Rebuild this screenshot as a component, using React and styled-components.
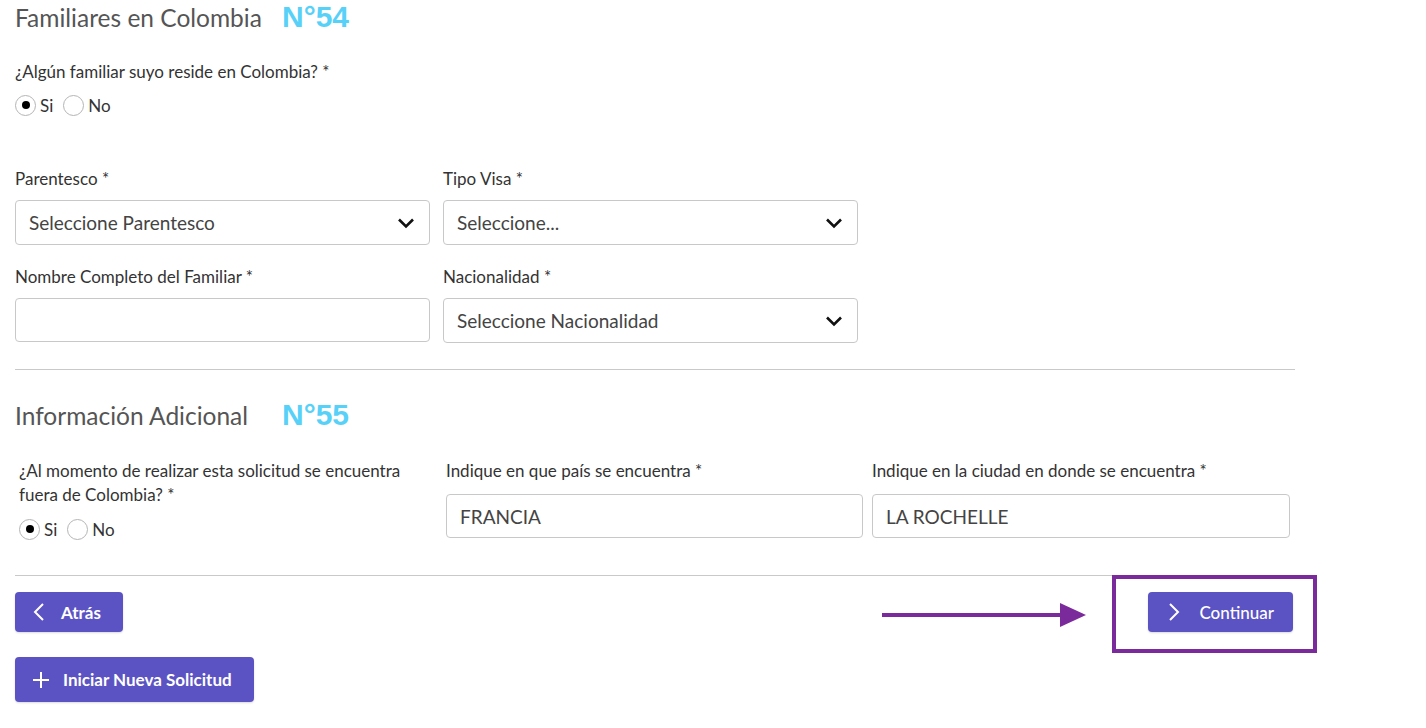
import styled, { createGlobalStyle } from "styled-components";

const GlobalStyle = createGlobalStyle`
  body {
    margin: 0;
    background: #fff;
    font-family: Lato, "Open Sans", sans-serif;
    color: #333;
  }
`;

const Page = styled.div`
  padding: 0 0 20px 15px;
  width: 1280px;
`;

const SectionHeader = styled.div`
  display: flex;
  align-items: baseline;
  height: 32px;
  margin-top: ${(p) => p.$mt || 0}px;
`;

const Title = styled.h2`
  margin: 0;
  width: 267px;
  font-size: 24.5px;
  line-height: 28px;
  font-weight: 400;
  color: #555;
`;

const Number = styled.span`
  font-family: "Liberation Sans", Arial, sans-serif;
  font-weight: 700;
  font-size: 30px;
  color: #58d1f9;
`;

const Label = styled.div`
  font-size: 17px;
  line-height: 24px;
  color: #333;
  margin-top: ${(p) => p.$mt || 0}px;
`;

const RadioRow = styled.div`
  display: flex;
  align-items: center;
  height: 24px;
  margin-top: ${(p) => p.$mt || 0}px;
  font-size: 17px;
  color: #333;
`;

const RadioOption = styled.label`
  display: flex;
  align-items: center;
  gap: 4px;
  margin-right: 10px;
`;

const Circle = styled.span`
  box-sizing: border-box;
  width: 21px;
  height: 21px;
  border-radius: 50%;
  border: 1px solid #b5b5b5;
  display: flex;
  align-items: center;
  justify-content: center;

  &::after {
    content: "";
    display: ${(p) => (p.$checked ? "block" : "none")};
    width: 8px;
    height: 8px;
    border-radius: 50%;
    background: #000;
  }
`;

const Grid = styled.div`
  display: grid;
  grid-template-columns: ${(p) => p.$cols};
  column-gap: ${(p) => p.$gap}px;
  margin-top: ${(p) => p.$mt || 0}px;
`;

const Field = styled.div`
  display: flex;
  flex-direction: column;
  padding-left: ${(p) => p.$pl || 0}px;
`;

const Box = styled.div`
  box-sizing: border-box;
  height: ${(p) => p.$h || 45}px;
  margin-top: ${(p) => p.$mt || 9}px;
  margin-bottom: ${(p) => p.$mb || 0}px;
  border: 1px solid #c8c8c8;
  border-radius: 4px;
  display: flex;
  align-items: center;
  justify-content: space-between;
  padding: 0 14px 0 13px;
  font-size: 19px;
  color: #444;
`;

const Divider = styled.hr`
  margin: ${(p) => p.$mt}px 0 0;
  border: none;
  border-top: 1px solid #c9c9c9;
  width: 1280px;
`;

const Footer = styled.div`
  margin-top: 16px;
  display: flex;
  justify-content: space-between;
  align-items: center;
  width: 1278px;
`;

const BottomRow = styled.div`
  margin-top: 25px;
  display: flex;
`;

const Button = styled.button`
  display: flex;
  align-items: center;
  gap: ${(p) => p.$gap || 16}px;
  height: ${(p) => p.$h || 40}px;
  padding: 0 ${(p) => p.$pr || 19}px 0 ${(p) => p.$pl || 18}px;
  border: none;
  border-radius: 4px;
  background: #5b53c3;
  color: #fff;
  font-family: Lato, sans-serif;
  font-size: 17px;
  font-weight: ${(p) => p.$weight || 700};
  box-shadow: 0 1px 2px rgba(0, 0, 0, 0.15);
`;

const Highlight = styled.div`
  position: relative;
`;

const HighlightBox = styled.div`
  position: absolute;
  left: -36px;
  top: -17px;
  right: -24px;
  bottom: -21px;
  border: 4px solid #7b2a9b;
  pointer-events: none;
`;

const Arrow = styled.svg`
  position: absolute;
  left: -266px;
  top: 10px;
`;

const Chevron = () => (
  <svg width="18" height="12" viewBox="0 0 18 12">
    <polyline points="2,2.5 9,9.5 16,2.5" fill="none" stroke="#111" strokeWidth="2.6" />
  </svg>
);

const Radio = ({ checked, children }) => (
  <RadioOption>
    <Circle $checked={checked} />
    {children}
  </RadioOption>
);

export default function App() {
  return (
    <>
      <GlobalStyle />
      <Page>
        <SectionHeader>
          <Title>Familiares en Colombia</Title>
          <Number>N°54</Number>
        </SectionHeader>
        <Label $mt={28}>¿Algún familiar suyo reside en Colombia? *</Label>
        <RadioRow $mt={9}>
          <Radio checked>Si</Radio>
          <Radio>No</Radio>
        </RadioRow>

        <Grid $cols="415px 415px" $gap={13} $mt={50}>
          <Field>
            <Label>Parentesco *</Label>
            <Box $mb={20}>
              Seleccione Parentesco
              <Chevron />
            </Box>
            <Label>Nombre Completo del Familiar *</Label>
            <Box $h={44} />
          </Field>
          <Field>
            <Label>Tipo Visa *</Label>
            <Box $mb={20}>
              Seleccione...
              <Chevron />
            </Box>
            <Label>Nacionalidad *</Label>
            <Box $h={45}>
              Seleccione Nacionalidad
              <Chevron />
            </Box>
          </Field>
        </Grid>

        <Divider $mt={26} />

        <SectionHeader $mt={28}>
          <Title>Información Adicional</Title>
          <Number>N°55</Number>
        </SectionHeader>

        <Grid $cols="422px 417px 418px" $gap={9} $mt={29}>
          <Field $pl={4}>
            <Label>
              ¿Al momento de realizar esta solicitud se encuentra fuera de
              Colombia? *
            </Label>
            <RadioRow $mt={10}>
              <Radio checked>Si</Radio>
              <Radio>No</Radio>
            </RadioRow>
          </Field>
          <Field>
            <Label>Indique en que país se encuentra *</Label>
            <Box $h={44} $mt={11}>
              FRANCIA
            </Box>
          </Field>
          <Field>
            <Label>Indique en la ciudad en donde se encuentra *</Label>
            <Box $h={44} $mt={11}>
              LA ROCHELLE
            </Box>
          </Field>
        </Grid>

        <Divider $mt={34} />

        <Footer>
          <Button $pl={18} $pr={22}>
            <svg width="12" height="20" viewBox="0 0 12 20">
              <polyline points="10,2 2,10 10,18" fill="none" stroke="#fff" strokeWidth="2" />
            </svg>
            Atrás
          </Button>
          <Highlight>
            <HighlightBox />
            <Arrow width="205" height="26" viewBox="0 0 205 26">
              <rect x="0" y="11" width="182" height="4" fill="#7b2a9b" />
              <polygon points="178,1 204,13 178,25" fill="#7b2a9b" />
            </Arrow>
            <Button $pl={20} $pr={19} $gap={19} $weight={500}>
              <svg width="12" height="20" viewBox="0 0 12 20">
                <polyline points="2,2 10,10 2,18" fill="none" stroke="#fff" strokeWidth="2" />
              </svg>
              Continuar
            </Button>
          </Highlight>
        </Footer>

        <BottomRow>
          <Button $h={45} $pl={17} $pr={22} $gap={13}>
            <svg width="18" height="18" viewBox="0 0 18 18">
              <path d="M9 1v16M1 9h16" stroke="#fff" strokeWidth="2" />
            </svg>
            Iniciar Nueva Solicitud
          </Button>
        </BottomRow>
      </Page>
    </>
  );
}
